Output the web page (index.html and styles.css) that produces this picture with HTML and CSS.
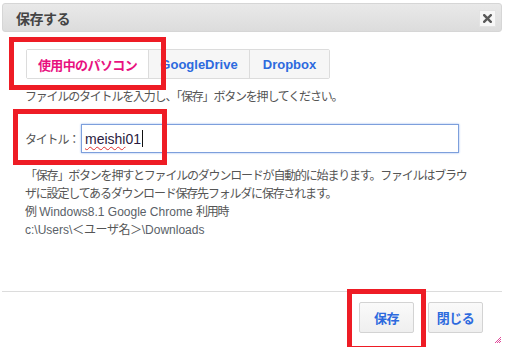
FILE: index.html
```html
<!DOCTYPE html>
<html lang="ja">
<head>
<meta charset="utf-8">
<title>保存する</title>
<link rel="stylesheet" href="styles.css">
</head>
<body>
<div class="dialog">
  <div class="titlebar">
    <span class="title">保存する</span>
    <span class="close"><svg width="9" height="9" viewBox="0 0 9 9"><path d="M1.2 1.2L7.8 7.8M7.8 1.2L1.2 7.8" stroke="#5a5a5a" stroke-width="2.4" stroke-linecap="square"/></svg></span>
  </div>
  <div class="content">
    <div class="tabs">
      <span class="tab tab-active">使用中のパソコン</span>
      <span class="tab tab-gd">GoogleDrive</span>
      <span class="tab tab-db">Dropbox</span>
    </div>
    <p class="instr">ファイルのタイトルを入力し、「保存」ボタンを押してください。</p>
    <div class="row">
      <span class="label">タイトル：</span>
      <div class="field"><span class="typo">meishi</span>01<span class="caret"></span></div>
    </div>
    <p class="desc">「保存」ボタンを押すとファイルのダウンロードが自動的に始まります。ファイルはブラウ<br>ザに設定してあるダウンロード保存先フォルダに保存されます。<br>例<span class="lat"> Windows8.1 Google Chrome </span>利用時<br><span class="lat">c:\Users\</span><span class="wide">＜ユーザ名＞</span><span class="lat">\Downloads</span></p>
  </div>
  <div class="footer">
    <button class="btn">保存</button>
    <button class="btn">閉じる</button>
  </div>
  <svg class="grip" width="8" height="8" viewBox="0 0 8 8"><path d="M7 1L1 7M7 3L3 7M7 5L5 7" stroke="#e04a9a" stroke-width="1"/></svg>
  <div class="mark mark-tab"></div>
  <div class="mark mark-title"></div>
  <div class="mark mark-save"></div>
</div>
</body>
</html>
```

FILE: styles.css
```css
html, body {
  margin: 0;
  padding: 0;
  background: #fff;
}
body {
  font-family: "Liberation Sans", "Noto Sans CJK JP", sans-serif;
  color: #555;
}
.dialog {
  position: relative;
  width: 505px;
  height: 347px;
  box-sizing: border-box;
  padding: 3px 3px 0 2px;
  display: flex;
  flex-direction: column;
  overflow: hidden;
}
.titlebar {
  height: 29px;
  box-sizing: border-box;
  border: 1px solid #d6d6d6;
  border-radius: 3px;
  background: linear-gradient(#e9e9e9, #dcdcdc);
  display: flex;
  align-items: center;
  justify-content: space-between;
  padding: 0 5px 0 13px;
}
.title {
  font-weight: bold;
  font-size: 14px;
  color: #444;
  letter-spacing: -0.5px;
}
.close {
  width: 17px;
  height: 17px;
  box-sizing: border-box;
  background: #f7f7f7;
  border: 1px solid #e3e3e3;
  display: flex;
  align-items: center;
  justify-content: center;
  margin-top: 1px;
}
.close svg {
  display: block;
}
.content {
  padding: 17px 0 0 24px;
}
.tabs {
  display: inline-flex;
  border: 1px solid #dcdcdc;
  border-radius: 2px;
}
.tab {
  height: 28px;
  display: flex;
  align-items: center;
  justify-content: center;
  font-weight: bold;
  font-size: 13px;
  color: #2d6ade;
  background: #f6f6f6;
  border-left: 1px solid #dcdcdc;
}
.tab-active {
  width: 121px;
  border-left: none;
  background: #fff;
  color: #e8117f;
  letter-spacing: -0.6px;
}
.tab-gd {
  width: 100px;
}
.tab-db {
  width: 79px;
}
.instr {
  margin: 9px 0 0 -1px;
  font-size: 12px;
  line-height: 18px;
  letter-spacing: -1.2px;
  color: #555;
}
.row {
  display: flex;
  align-items: center;
  margin-top: 18px;
  margin-left: -1px;
}
.label {
  width: 56px;
  font-size: 12px;
  letter-spacing: -1.2px;
  color: #555;
}
.field {
  width: 378px;
  height: 29px;
  box-sizing: border-box;
  border: 1px solid #7d9fdc;
  box-shadow: 0 0 2px #9ab8ee;
  display: flex;
  align-items: center;
  padding-left: 3px;
  font-size: 14px;
  color: #2a1a40;
}
.typo {
  text-decoration: underline wavy #e03030;
  text-decoration-thickness: 1px;
  text-underline-offset: 2px;
}
.caret {
  width: 1px;
  height: 17px;
  background: #111;
  margin-left: 1px;
}
.desc {
  margin: 14px 0 0 -1px;
  font-size: 12px;
  line-height: 18px;
  letter-spacing: -1.2px;
  white-space: nowrap;
  color: #555;
}
.lat {
  letter-spacing: 0;
  color: #5a5f68;
}
.wide {
  letter-spacing: -0.4px;
}
.footer {
  margin-top: auto;
  margin-bottom: 14px;
  border-top: 1px solid #dcdcdc;
  padding: 10px 19px 0 0;
  display: flex;
  justify-content: flex-end;
  gap: 14px;
}
.btn {
  width: 55px;
  height: 31px;
  border: 1px solid #d3d3d3;
  border-radius: 2px;
  background: linear-gradient(#fafafa, #efefef);
  font-family: "Liberation Sans", "Noto Sans CJK JP", sans-serif;
  font-weight: bold;
  font-size: 13px;
  color: #2d6ade;
  padding: 0;
  letter-spacing: -0.5px;
}
.grip {
  position: absolute;
  right: 3px;
  bottom: 3px;
}
.mark {
  position: absolute;
  border: 5px solid #ee1c25;
  box-sizing: border-box;
}
.mark-tab {
  left: 9px;
  top: 37px;
  width: 157px;
  height: 53px;
}
.mark-title {
  left: 13px;
  top: 109px;
  width: 154px;
  height: 56px;
}
.mark-save {
  left: 347px;
  top: 289px;
  width: 79px;
  height: 62px;
}
```
